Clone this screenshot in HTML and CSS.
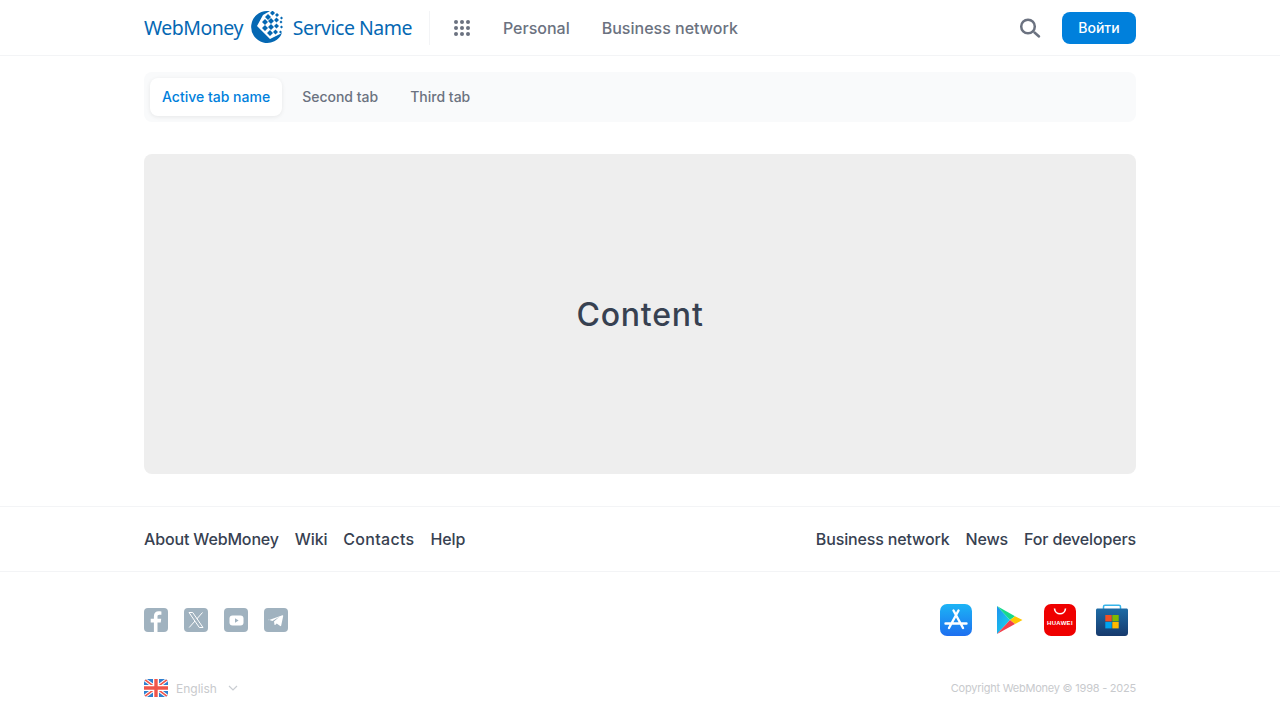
FILE: index.html
```html
<!DOCTYPE html>
<html lang="en">
<head>
    <meta charset="UTF-8">
    <meta name="viewport" content="width=device-width, initial-scale=1.0">
    <title>WebMoney - Service Name</title>
    <link rel="stylesheet" href="styles.css">
</head>
<body>

    <!-- Header -->
    <header class="header">
        <div class="wrap header-row">
            <a class="logo" href="#">
                <span class="logo-text">WebMoney</span>
                <svg class="logo-globe" width="34" height="34" viewBox="3 2 34 34">
                    <path fill="#0568b3" d="M19 2A16 16 0 1 0 34 24L22 30 9 17 15 6 22 2Z"/>
                    <g fill="#0568b3" transform="translate(2 0)">
                        <path d="M15 8l3-3 3 3-3 3zM20 4l2.500-2.500 2.500 2.500-2.500 2.500zM25 6l2-2 2 2-2 2zM30 9l1.500-1.500 1.500 1.500-1.500 1.500z"/>
                        <path d="M12 13l3-3 3 3-3 3zM18 12l3-3 3 3-3 3zM24 11l2.500-2.500 2.500 2.500-2.500 2.500zM29.500 13l1.500-1.500 1.500 1.500-1.500 1.500z"/>
                        <path d="M12 19l3-3 3 3-3 3zM18 18l3-3 3 3-3 3zM24 17l2.500-2.500 2.500 2.500-2.500 2.500zM30 18l1.500-1.500 1.500 1.500-1.500 1.500z"/>
                        <path d="M17 24l3-3 3 3-3 3zM23 23l2.500-2.500 2.500 2.500-2.500 2.500zM29 23l1.500-1.500 1.500 1.500-1.500 1.500z"/>
                    </g>
                </svg>
                <span class="logo-text">Service Name</span>
            </a>
            <nav class="main-nav">
                <svg class="apps-icon" width="18" height="18" viewBox="0 0 18 18" fill="#6b7280">
                    <circle cx="3" cy="3" r="2"/><circle cx="9" cy="3" r="2"/><circle cx="15" cy="3" r="2"/>
                    <circle cx="3" cy="9" r="2"/><circle cx="9" cy="9" r="2"/><circle cx="15" cy="9" r="2"/>
                    <circle cx="3" cy="15" r="2"/><circle cx="9" cy="15" r="2"/><circle cx="15" cy="15" r="2"/>
                </svg>
                <a href="#">Personal</a>
                <a href="#">Business network</a>
            </nav>
            <div class="header-right">
                <svg class="search-icon" width="22" height="22" viewBox="0 0 22 22" fill="none" stroke="#6b7280">
                    <circle cx="9" cy="9.500" r="6.800" stroke-width="2.500"/>
                    <path d="M15.500 15.500l4.500 4" stroke-width="2.500" stroke-linecap="round"/>
                </svg>
                <button class="login-btn">Войти</button>
            </div>
        </div>
    </header>

    <main class="wrap">
        <!-- Tabs -->
        <div class="tabs">
            <a class="tab active" href="#">Active tab name</a>
            <a class="tab" href="#">Second tab</a>
            <a class="tab" href="#">Third tab</a>
        </div>

        <div class="content">Content</div>
    </main>

    <!-- Footer -->
    <footer>
        <div class="footer-links">
            <div class="wrap footer-links-row">
                <div class="link-group">
                    <a href="#">About WebMoney</a>
                    <a href="#">Wiki</a>
                    <a class="link-wide" href="#">Contacts</a>
                    <a href="#">Help</a>
                </div>
                <div class="link-group">
                    <a href="#">Business network</a>
                    <a href="#">News</a>
                    <a href="#">For developers</a>
                </div>
            </div>
        </div>

        <div class="wrap apps-row">
            <div class="socials">
                <svg class="social" viewBox="0 0 24 24">
                    <rect width="24" height="24" rx="4" fill="#a0b2bf"/>
                    <path fill="#fff" d="M13.500 24v-9.500h3.200l.5-3.700h-3.700V8.600c0-1.100.4-1.800 1.900-1.800h2V3.500c-.4 0-1.500-.2-2.800-.2-2.800 0-4.700 1.700-4.700 4.900v2.600H6.700v3.700h3.200V24z"/>
                </svg>
                <svg class="social" viewBox="0 0 24 24">
                    <rect width="24" height="24" rx="4" fill="#a0b2bf"/>
                    <path fill="none" stroke="#fff" stroke-width="1" d="M5 4.500h3.700L19 19.500h-3.700zM18.500 4.500l-5.800 6.600M11 13l-5.800 6.500"/>
                </svg>
                <svg class="social" viewBox="0 0 24 24">
                    <rect width="24" height="24" rx="4" fill="#a0b2bf"/>
                    <rect x="5.500" y="7.500" width="14" height="10" rx="3" fill="#fff"/>
                    <path fill="#a0b2bf" d="M11 10.200l3.600 2.300-3.600 2.300z"/>
                </svg>
                <svg class="social" viewBox="0 0 24 24">
                    <rect width="24" height="24" rx="4" fill="#a0b2bf"/>
                    <path fill="#fff" d="M4.500 12.300L18.400 7.200c.5-.2.9.1.800.7L17.200 17.600c-.1.500-.5.700-1 .4l-3.500-2.500-1.500 1.400c-.3.300-.6.200-.7-.2l-.5-3.200 5.400-4.700-7 4.200-3.700-1.200c-.6-.2-.6-.4-.1-.5z"/>
                </svg>
            </div>
            <div class="stores">
                <svg class="store" viewBox="0 0 32 32">
                    <defs>
                        <linearGradient id="appstore" x1="0" y1="0" x2="0" y2="1">
                            <stop offset="0" stop-color="#1cb4f5"/><stop offset="1" stop-color="#1e6ff0"/>
                        </linearGradient>
                    </defs>
                    <rect width="32" height="32" rx="7" fill="url(#appstore)"/>
                    <path fill="none" stroke="#fff" stroke-width="2.400" stroke-linecap="round" d="M18.500 6.500L9 24M13.500 6.500L23 24M5.500 19.500h21"/>
                </svg>
                <svg class="store" viewBox="0 0 32 32">
                    <defs>
                        <linearGradient id="playleft" x1="0" y1="0" x2="1" y2="1">
                            <stop offset="0" stop-color="#1f8ff0"/><stop offset="1" stop-color="#12e0e8"/>
                        </linearGradient>
                    </defs>
                    <path fill="url(#playleft)" d="M5 2l13 14L5 30z"/>
                    <path fill="#16d98c" d="M5 2l18 10.300-5 3.700z"/>
                    <path fill="#ffc800" d="M23 12.300L30.500 16 23 20l-5-4z"/>
                    <path fill="#f2404c" d="M5 30l13-14 5 4z"/>
                </svg>
                <svg class="store" viewBox="0 0 32 32">
                    <rect width="32" height="32" rx="7" fill="#ef0000"/>
                    <path fill="none" stroke="#fff" stroke-width="1.600" d="M10.500 4.500c.5 7 10.500 7 11 0"/>
                    <text class="huawei" x="16" y="20.500" text-anchor="middle">HUAWEI</text>
                </svg>
                <svg class="store" viewBox="0 0 32 32">
                    <defs>
                        <linearGradient id="msstore" x1="0" y1="0" x2="0" y2="1">
                            <stop offset="0" stop-color="#1d6ba5"/><stop offset="1" stop-color="#173a6d"/>
                        </linearGradient>
                    </defs>
                    <path fill="none" stroke="#35b4ea" stroke-width="1.500" d="M7.500 5V2.800c0-1 .5-1.500 1.500-1.500h14c1 0 1.500.5 1.500 1.500V5"/>
                    <path fill="url(#msstore)" d="M1.500 4.500h29c.8 0 1.500.7 1.500 1.500v23c0 1.700-1.300 3-3 3H3c-1.700 0-3-1.300-3-3V6c0-.8.7-1.500 1.500-1.500z"/>
                    <rect x="9.300" y="11" width="6.400" height="6.400" fill="#f25022"/>
                    <rect x="16.300" y="11" width="6.400" height="6.400" fill="#7fba00"/>
                    <rect x="9.300" y="18" width="6.400" height="6.400" fill="#00a4ef"/>
                    <rect x="16.300" y="18" width="6.400" height="6.400" fill="#ffb900"/>
                </svg>
            </div>
        </div>

        <div class="wrap bottom-row">
            <div class="lang">
                <svg class="flag" width="24" height="18" viewBox="0 0 24 18">
                    <defs><clipPath id="flagclip"><rect width="24" height="18" rx="4"/></clipPath></defs>
                    <g clip-path="url(#flagclip)">
                        <rect width="24" height="18" fill="#2f7fcf"/>
                        <path stroke="#fff" stroke-width="3.600" d="M0 0l24 18M24 0L0 18"/>
                        <path stroke="#f0554a" stroke-width="1.600" d="M0 0l24 18M24 0L0 18"/>
                        <path stroke="#fff" stroke-width="6" d="M12 0v18M0 9h24"/>
                        <path stroke="#f0554a" stroke-width="3.400" d="M12 0v18M0 9h24"/>
                    </g>
                </svg>
                <span>English</span>
                <svg class="chevron" width="10" height="6" viewBox="0 0 10 6" fill="none" stroke="#c9cdd2" stroke-width="1.200">
                    <path d="M1 1l4 4 4-4"/>
                </svg>
            </div>
            <div class="copyright">Copyright WebMoney © 1998 - 2025</div>
        </div>
    </footer>

</body>
</html>
```

FILE: styles.css
```css
/* Global Styles */
body {
    margin: 0;
    padding: 0;
    font-family: 'Inter', sans-serif;
    background-color: #fff;
    color: #374151;
}

a {
    color: inherit;
    text-decoration: none;
}

.wrap {
    width: 992px;
    margin: 0 auto;
}

/* Header */
.header {
    height: 55px;
    border-bottom: 1px solid #f3f4f6;
}

.header-row {
    height: 100%;
    display: flex;
    align-items: center;
}

.logo {
    display: flex;
    align-items: center;
    gap: 8px;
    height: 34px;
    padding-right: 17px;
    border-right: 1px solid #f3f4f6;
}

.logo-text {
    font-family: 'Noto Sans', sans-serif;
    font-size: 19.500px;
    letter-spacing: -0.5px;
    color: #0568b3;
}

.main-nav {
    display: flex;
    align-items: center;
    gap: 32px;
    margin-left: 23px;
    font-size: 16px;
    font-weight: 500;
    color: #6b7280;
}

.header-right {
    margin-left: auto;
    display: flex;
    align-items: center;
    gap: 21px;
}

.login-btn {
    width: 74px;
    height: 32px;
    border: none;
    border-radius: 8px;
    background-color: #0080dc;
    color: #fff;
    font-family: inherit;
    font-size: 14px;
    font-weight: 500;
}

/* Tabs */
.tabs {
    display: flex;
    gap: 8px;
    margin-top: 16px;
    padding: 6px;
    border-radius: 8px;
    background-color: #f9fafb;
}

.tab {
    padding: 0 12px;
    height: 38px;
    line-height: 38px;
    border-radius: 8px;
    font-size: 14px;
    font-weight: 500;
    color: #6b7280;
}

.tab.active {
    background-color: #fff;
    color: #0080dc;
    box-shadow: 0 1px 4px rgba(0, 0, 0, 0.08);
}

/* Content */
.content {
    height: 320px;
    margin: 32px 0;
    display: flex;
    justify-content: center;
    align-items: center;
    border-radius: 8px;
    background-color: #eee;
    font-size: 32px;
    font-weight: 500;
    letter-spacing: 0.8px;
}

/* Footer */
.footer-links {
    border-top: 1px solid #f3f4f6;
    border-bottom: 1px solid #f3f4f6;
}

.footer-links-row {
    height: 64px;
    display: flex;
    justify-content: space-between;
    align-items: center;
}

.link-group {
    display: flex;
    gap: 16px;
    font-size: 16px;
    font-weight: 500;
    letter-spacing: -0.15px;
}

.link-wide {
    letter-spacing: 0.3px;
}

.apps-row {
    display: flex;
    justify-content: space-between;
    align-items: center;
    margin-top: 32px;
}

.socials {
    display: flex;
    gap: 16px;
}

.social {
    width: 24px;
    height: 24px;
}

.stores {
    display: flex;
    gap: 20px;
    padding-right: 8px;
}

.store {
    width: 32px;
    height: 32px;
}

.huawei {
    font-family: 'Liberation Sans', sans-serif;
    font-size: 6px;
    font-weight: 700;
    letter-spacing: 0.3px;
    fill: #fff;
}

.bottom-row {
    display: flex;
    justify-content: space-between;
    align-items: center;
    margin-top: 43px;
    font-size: 12px;
    color: #c8cacd;
}

.lang {
    display: flex;
    align-items: center;
    gap: 8px;
}

.chevron {
    margin-left: 3px;
}

.copyright {
    font-size: 11px;
    letter-spacing: -0.23px;
}
```
